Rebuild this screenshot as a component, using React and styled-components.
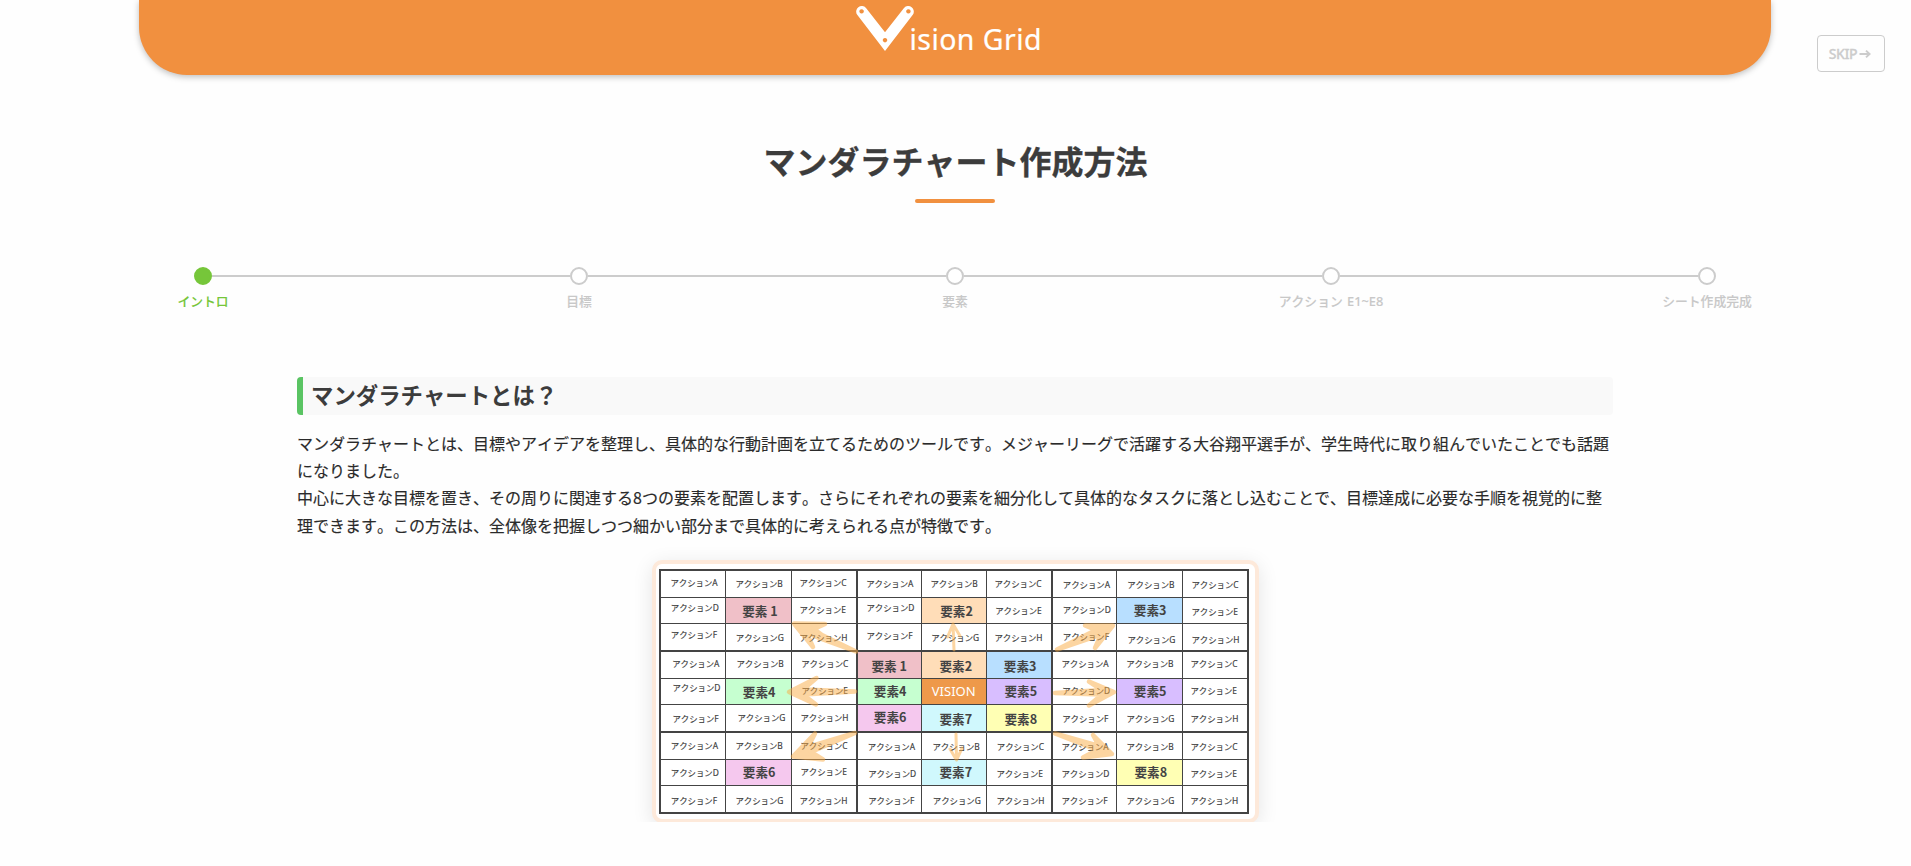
import React from "react";
import styled, { createGlobalStyle } from "styled-components";

const Global = createGlobalStyle`
  *, *::before, *::after { box-sizing: border-box; }
  body {
    margin: 0;
    background: #fefefe;
    color: #2a2a2a;
    font-family: "Noto Sans CJK JP", "Noto Sans", sans-serif;
    font-kerning: none;
    overflow: hidden;
  }
`;

const Page = styled.div`
  position: relative;
  height: 822px;
  overflow: hidden;
`;

const Header = styled.header`
  width: 1632px;
  height: 75px;
  margin: 0 auto 0 139px;
  background: #f1903f;
  border-radius: 0 0 48px 48px;
  box-shadow: 0 2px 6px rgba(0, 0, 0, 0.25);
  display: flex;
  justify-content: center;
`;

const Logo = styled.svg`
  width: 200px;
  height: 60px;
  font-family: "Noto Sans", sans-serif;
`;

const SkipButton = styled.button`
  position: absolute;
  top: 35px;
  right: 26px;
  width: 68px;
  height: 37px;
  padding: 0 2px 0 0;
  display: flex;
  align-items: center;
  justify-content: center;
  gap: 2px;
  background: transparent;
  border: 1px solid #ccc;
  border-radius: 4px;
  color: #ccc;
  font: 500 14px "Noto Sans", sans-serif;
  letter-spacing: -0.4px;
  -webkit-text-stroke: 0.3px currentColor;
`;

const Title = styled.h1`
  margin: 62px 0 0;
  height: 62px;
  line-height: 46px;
  font-size: 32px;
  font-weight: 700;
  text-align: center;
  color: #3c3c3c;
  -webkit-text-stroke: 0.3px #3c3c3c;
`;

const TitleBar = styled.div`
  width: 80px;
  height: 4px;
  margin: 0 0 0 915px;
  border-radius: 2px;
  background: #f1903f;
`;

const Steps = styled.ol`
  list-style: none;
  display: flex;
  width: 1880px;
  margin: 64px 0 0 15px;
  padding: 0;
`;

const Step = styled.li`
  flex: 0 0 376px;
  display: grid;
  grid-template-columns: 1fr 18px 1fr;
  align-items: center;
  row-gap: 7px;
`;

const Rail = styled.span`
  height: 2px;
  background: ${(p) => (p.$hidden ? "transparent" : "#ccc")};
`;

const Dot = styled.span`
  height: 18px;
  border-radius: 50%;
  border: 2px solid ${(p) => (p.$active ? "#76c63a" : "#ccc")};
  background: ${(p) => (p.$active ? "#76c63a" : "#fff")};
`;

const StepLabel = styled.span`
  grid-column: 1 / -1;
  text-align: center;
  font-family: "Noto Sans", "Noto Sans CJK JP", sans-serif;
  font-size: 12.8px;
  font-weight: 500;
  line-height: 18px;
  word-spacing: 1px;
  color: ${(p) => (p.$active ? "#76c63a" : "#c8c8c8")};
  -webkit-text-stroke: 0.1px currentColor;
`;

const Section = styled.section`
  width: 1316px;
  margin: 67px 0 0 297px;
`;

const SectionTitle = styled.h2`
  margin: 0;
  height: 38px;
  padding-left: 8px;
  border-left: 6px solid #5ac463;
  border-radius: 4px;
  background: #f9f9f9;
  color: #3c3c3c;
  font-size: 22.4px;
  line-height: 35px;
`;

const Copy = styled.p`
  margin: 15px 0 0;
  font-size: 16px;
  line-height: 27.2px;
  -webkit-text-stroke: 0.15px currentColor;
`;

const Figure = styled.figure`
  width: 607px;
  height: 263px;
  margin: 21px 0 0 355px;
  padding: 5px 6px 5px 3px;
  border: 4px solid #fde9da;
  border-radius: 10px;
  background: #fff;
  box-shadow: 0 4px 20px rgba(0, 0, 0, 0.1);
`;

const Chart = styled.div`
  position: relative;
  display: grid;
  grid-template-columns: 65px 66px 66px 64px 65px 66px 64px 66px 66px;
  grid-template-rows: 27px 26px 28px 27px 26px 28px 27px 26px 28px;
  border: solid #444;
  border-width: 2px 0 0 2px;
  width: 590px;
`;

const Cell = styled.div`
  border: solid #444;
  border-width: 0 ${(p) => (p.$thickRight ? 2 : 1)}px ${(p) => (p.$thickBottom ? 2 : 1)}px 0;
  background: ${(p) => p.$fill};
  padding-left: ${(p) => p.$left}px;
  padding-top: ${(p) => p.$top}px;
  overflow: hidden;
  white-space: nowrap;
`;

const ActionText = styled.span`
  display: block;
  font-family: "Noto Sans", "Noto Sans CJK JP", sans-serif;
  font-size: 8.4px;
  line-height: 12px;
  color: #3c3c3c;
  -webkit-text-stroke: 0.15px currentColor;
`;

const ElementText = styled.span`
  display: block;
  font-size: 12.6px;
  font-weight: 700;
  line-height: 16px;
  color: #444;
`;

const VisionText = styled(ElementText)`
  font-family: "Noto Sans", sans-serif;
  font-size: 13px;
  font-weight: 400;
  color: #fff;
`;

const Arrows = styled.svg`
  position: absolute;
  left: -2px;
  top: -2px;
  width: 590px;
  height: 245px;
  pointer-events: none;
`;

const STEPS = ["イントロ", "目標", "要素", "アクション E1~E8", "シート作成完成"];

const FILLS = {
  要素1: "#f0c0c8",
  要素2: "#ffddb8",
  要素3: "#b8dfff",
  要素4: "#c6ffd0",
  要素5: "#d8beff",
  要素6: "#f5c8ee",
  要素7: "#d0f8fd",
  要素8: "#ffffb4",
  VISION: "#ee994a",
};

// Each entry: label (a single letter is an action), label start x, label centre y
const CELLS = [
  [["A", 671, 583.7], ["B", 736, 584], ["C", 800, 583.5], ["A", 866.7, 584.7], ["B", 931, 584.7], ["C", 995, 584.7], ["A", 1063.3, 585], ["B", 1127.7, 585], ["C", 1192, 585]],
  [["D", 671.3, 608], ["要素1", 742.7, 611], ["E", 800, 610.3], ["D", 867, 608.7], ["要素2", 940.7, 611.7], ["E", 995.7, 611.7], ["D", 1063.3, 610], ["要素3", 1134.3, 610.7], ["E", 1192, 612]],
  [["F", 671.3, 635.7], ["G", 736.3, 638], ["H", 800, 638], ["F", 867, 636], ["G", 931.7, 638.7], ["H", 995, 638.7], ["F", 1063.3, 637], ["G", 1128, 640], ["H", 1192, 640]],
  [["A", 672.7, 664.3], ["B", 737, 664], ["C", 801.7, 664], ["要素1", 872, 666], ["要素2", 940, 666.7], ["要素3", 1004.3, 666.7], ["A", 1062, 664], ["B", 1126.7, 664], ["C", 1191, 664]],
  [["D", 673, 688], ["要素4", 743.3, 692], ["E", 802, 691], ["要素4", 874.3, 691.7], ["VISION", 932.3, 691.7], ["要素5", 1005, 691.7], ["D", 1062.7, 691], ["要素5", 1134.3, 691.7], ["E", 1191, 691]],
  [["F", 673, 719], ["G", 738, 718.3], ["H", 801, 718], ["要素6", 874.3, 717.7], ["要素7", 940, 719], ["要素8", 1005, 719], ["F", 1062.7, 719], ["G", 1127, 719], ["H", 1191, 719]],
  [["A", 671.3, 746], ["B", 736, 746], ["C", 801, 746], ["A", 868.3, 747.3], ["B", 933, 747.3], ["C", 997.3, 747.3], ["A", 1062, 747], ["B", 1127, 747], ["C", 1191, 747]],
  [["D", 671.3, 773], ["要素6", 743.3, 772.3], ["E", 801, 772.7], ["D", 868.7, 774], ["要素7", 940, 772.3], ["E", 997, 774], ["D", 1062, 774], ["要素8", 1135, 772.7], ["E", 1191, 774]],
  [["F", 671.3, 801], ["G", 736, 801], ["H", 800, 801], ["F", 868.7, 801.7], ["G", 933.3, 801], ["H", 997, 801], ["F", 1062, 801], ["G", 1127, 801], ["H", 1190.7, 801]],
];
const COL_X = [661, 726, 792, 858, 922, 987, 1053, 1117, 1183];
const ROW_Y = [571, 598, 624, 652, 679, 705, 733, 760, 786];

function ChartCell({ cell, row, col }) {
  const [label, x, y] = cell;
  const isAction = label.length === 1;
  const half = isAction ? 6.2 : 8.2;
  const Text = isAction ? ActionText : label === "VISION" ? VisionText : ElementText;
  const spaced = label === "要素1";
  return (
    <Cell
      $fill={FILLS[label] || "#fff"}
      $thickRight={col % 3 === 2}
      $thickBottom={row % 3 === 2}
      $left={x - COL_X[col] - 0.5}
      $top={Math.max(0, y - ROW_Y[row] - half)}
    >
      <Text>{isAction ? `アクション${label}` : spaced ? "要素 1" : label}</Text>
    </Cell>
  );
}

export default function App() {
  return (
    <>
      <Global />
      <Page>
        <Header>
          <Logo viewBox="855 0 200 60">
            <path
              fill="#fff"
              fillRule="evenodd"
              d="M857.2 14.8A5.6 5.6 0 0 1 866 7.9L885 32.3L904 7.9A5.6 5.6 0 0 1 912.8 14.8L885 51ZM861.6 9.2a2.2 2.2 0 1 0 .01 0ZM908.4 9.2a2.2 2.2 0 1 0 .01 0ZM885 38a2.2 2.2 0 1 0 .01 0Z"
            />
            <text x="909.5" y="49.5" fontSize="28.5" fill="#fff" stroke="#fff" strokeWidth="0.2" textLength="132">
              ision Grid
            </text>
          </Logo>
        </Header>
        <SkipButton>
          SKIP
          <svg width="12" height="10" viewBox="0 0 12 10" fill="none" stroke="currentColor" strokeWidth="1.9">
            <path d="M0.5 5H10.5M7 1.6L10.6 5L7 8.4" />
          </svg>
        </SkipButton>
        <Title>マンダラチャート作成方法</Title>
        <TitleBar />
        <Steps>
          {STEPS.map((name, i) => (
            <Step key={name}>
              <Rail $hidden={i === 0} />
              <Dot $active={i === 0} />
              <Rail $hidden={i === STEPS.length - 1} />
              <StepLabel $active={i === 0}>{name}</StepLabel>
            </Step>
          ))}
        </Steps>
        <Section>
          <SectionTitle>マンダラチャートとは？</SectionTitle>
          <Copy>
            マンダラチャートとは、目標やアイデアを整理し、具体的な行動計画を立てるためのツールです。メジャーリーグで活躍する大谷翔平選手が、学生時代に取り組んでいたことでも話題になりました。
            <br />
            中心に大きな目標を置き、その周りに関連する8つの要素を配置します。さらにそれぞれの要素を細分化して具体的なタスクに落とし込むことで、目標達成に必要な手順を視覚的に整理できます。この方法は、全体像を把握しつつ細かい部分まで具体的に考えられる点が特徴です。
          </Copy>
          <Figure>
            <Chart>
              {CELLS.map((cells, r) =>
                cells.map((cell, c) => <ChartCell key={`${r}-${c}`} cell={cell} row={r} col={c} />)
              )}
              <Arrows viewBox="659 569 590 245">
                <g
                  opacity="0.5"
                  fill="#fbac45"
                  stroke="#fbac45"
                  strokeLinecap="round"
                  strokeLinejoin="round"
                  strokeWidth="4.5"
                >
                  <path d="M794 623.5L825 624L814 629L822 635L856 651.5L820 638.5L806 632L813 647Z" />
                  <path d="M789 692L816.5 678L803 689.5L855 691.5L803 694.5L816 704.5Z" />
                  <path d="M793 756.5L815 733.5L808 747L855 733L811 752L823 759.5Z" />
                  <path d="M1113 625.5L1085 625.5L1096 630L1057 649.5L1101 634.5L1095 648Z" />
                  <path d="M1114 692L1089 681.5L1102 690L1055 693L1102 694.5L1089 705.5Z" />
                  <path d="M1112 754L1093 735L1099 746L1055 733.5L1097 750L1083 757.5Z" />
                  <path fill="none" strokeWidth="3" d="M954 650L953 624M947.5 637L953 624L960 636" />
                  <path fill="none" strokeWidth="3" d="M956 734L956.5 759M950 749L956.5 760L962 748" />
                </g>
              </Arrows>
            </Chart>
          </Figure>
        </Section>
      </Page>
    </>
  );
}
